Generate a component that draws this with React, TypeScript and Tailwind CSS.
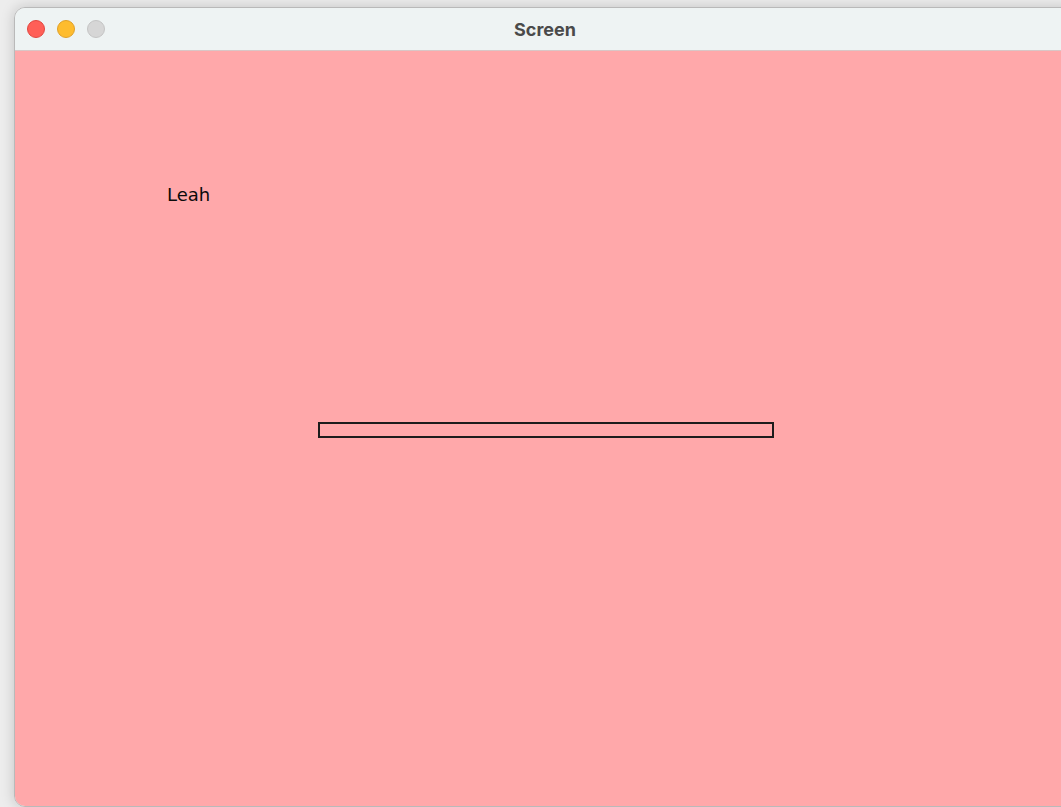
export default function App() {
  return (
    <div className="w-[1061px] h-[807px] overflow-hidden bg-[#ededed] pl-[14px] pt-[7px]">
      {/* window */}
      <div className="w-[1064px] h-[800px] rounded-[11px] border border-[#b9b9b9] overflow-hidden shadow-[0_0_14px_rgba(0,0,0,0.18)] flex flex-col">
        <div className="relative h-[43px] shrink-0 bg-[#eef3f3] border-b border-[#d9c6c6] flex items-center justify-center">
          <div className="absolute left-[12px] top-[12px] flex gap-[12px]">
            <span className="w-[18px] h-[18px] rounded-full bg-[#ff5f57] border border-[#e2463f]" />
            <span className="w-[18px] h-[18px] rounded-full bg-[#febc2e] border border-[#e0a028]" />
            <span className="w-[18px] h-[18px] rounded-full bg-[#d6d6d6] border border-[#c4c4c4]" />
          </div>
          <span className="text-[18px] font-bold text-[#4a4a4a] font-['Inter',sans-serif] ml-[-2px]">Screen</span>
        </div>
        <div className="flex-1 bg-[#ffa8aa] pl-[152px] pt-[132px]">
          <div className="text-[18px] leading-[24px] text-[#0a0a0a] font-['DejaVu_Sans',sans-serif]">Leah</div>
          <div className="ml-[151px] mt-[215px] w-[456px] h-[16px] border-2 border-[#1c1c1c]" />
        </div>
      </div>
    </div>
  )
}
